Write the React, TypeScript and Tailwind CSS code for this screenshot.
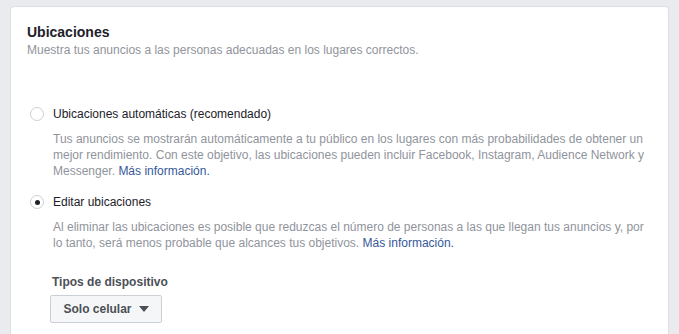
import type { ReactNode } from "react";

function Radio({ checked }: { checked?: boolean }) {
  return (
    <span className="flex h-[14px] w-[14px] shrink-0 items-center justify-center rounded-full border border-[#ccd0d5] bg-white">
      {checked && <span className="h-[5px] w-[5px] rounded-full bg-[#1d2129]" />}
    </span>
  );
}

function Option({ label, checked, children }: { label: string; checked?: boolean; children: ReactNode }) {
  return (
    <div>
      <label className="flex items-center gap-[9px] pl-[3px] text-[12px] leading-4 text-[#1d2129]">
        <Radio checked={checked} />
        <span>{label}</span>
      </label>
      <p className="mt-[9px] pl-[26px] text-[12px] leading-4 text-[#90949c]">{children}</p>
    </div>
  );
}

function MoreInfo() {
  return <a className="text-[#365899]">Más información.</a>;
}

export default function App() {
  return (
    <div className="min-h-[334px] bg-[#e9ebee] px-[10px] pt-[6px] font-['Liberation_Sans',Arial,sans-serif]">
      <section className="h-[340px] rounded-[4px] border border-[#dddfe2] bg-white pl-4 pr-5 pt-4">
        <h2 className="text-[14px] font-bold leading-[18px] text-[#1d2129]">Ubicaciones</h2>
        <p className="mt-px text-[12px] leading-4 text-[#90949c]">
          Muestra tus anuncios a las personas adecuadas en los lugares correctos.
        </p>

        <div className="mt-[48px] flex flex-col gap-[15px]">
          <Option label="Ubicaciones automáticas (recomendado)">
            Tus anuncios se mostrarán automáticamente a tu público en los lugares con más probabilidades de obtener un
            mejor rendimiento. Con este objetivo, las ubicaciones pueden incluir Facebook, Instagram, Audience Network y
            Messenger. <MoreInfo />
          </Option>
          <Option label="Editar ubicaciones" checked>
            Al eliminar las ubicaciones es posible que reduzcas el número de personas a las que llegan tus anuncios y, por
            lo tanto, será menos probable que alcances tus objetivos. <MoreInfo />
          </Option>
        </div>

        <div className="mt-[23px] pl-[23px]">
          <h3 className="pl-[2px] text-[12px] font-bold leading-4 text-[#4b4f56]">Tipos de dispositivo</h3>
          <button
            className="mt-[5px] flex h-[28px] w-[112px] items-center justify-center gap-[7px] rounded-[2px] border border-[#ccd0d5] bg-[#f5f6f7] text-[12px] font-bold text-[#4b4f56]"
            type="button"
          >
            Solo celular
            <svg width="10" height="6" viewBox="0 0 10 6">
              <path d="M0 0h10L5 6z" fill="#4b4f56" />
            </svg>
          </button>
        </div>
      </section>
    </div>
  );
}
